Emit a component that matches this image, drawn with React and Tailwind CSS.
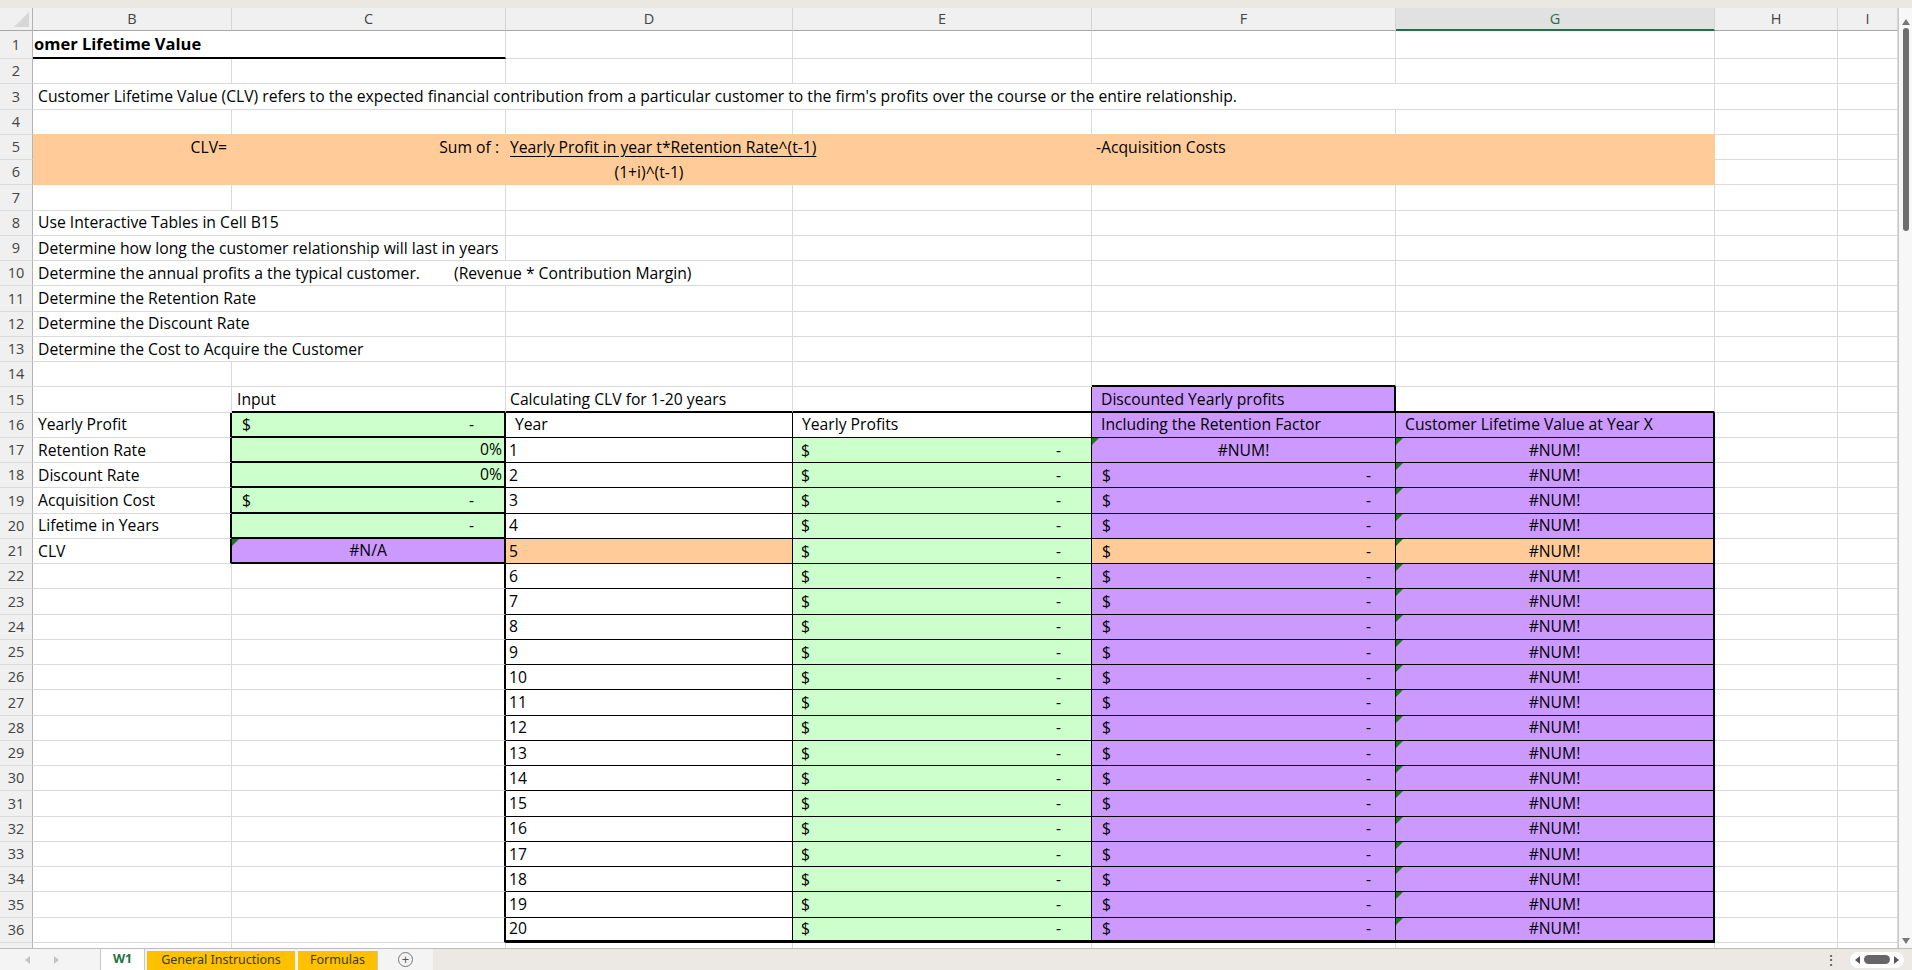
import clsx from 'clsx'

const GRID = 'border-r border-b border-[#dadada]'

const Tri = () => (
  <svg className="absolute left-0 top-0" width="7" height="7" viewBox="0 0 7 7">
    <polygon points="0,0 7,0 0,7" fill="#1a7a1a" />
  </svg>
)

const Cell = ({ w, b = GRID, className, tri, children }) => (
  <div className={clsx('relative shrink-0 h-full flex items-center pt-[1px] overflow-hidden whitespace-nowrap', w, b, className)}>
    {tri && <Tri />}
    {children}
  </div>
)

const Money = ({ l = 'pl-[8px]', r = 'pr-[30px]' }) => (
  <div className={clsx('flex w-full justify-between', l, r)}>
    <span>$</span>
    <span>-</span>
  </div>
)

const RowNum = ({ n }) => (
  <div className="shrink-0 w-[33px] h-full flex items-center justify-center bg-[#f0f0f0] border-r border-r-[#b4b4b4] border-b border-b-[#dcdcdc] text-[14.5px] text-[#444]">
    {n}
  </div>
)

const Row = ({ n, h = 'h-[25.25px]', children }) => (
  <div className={clsx('flex shrink-0', h)}>
    <RowNum n={n} />
    {children}
  </div>
)

const Tail = () => (
  <>
    <Cell w="w-[123px]" />
    <Cell w="w-[60px]" />
  </>
)

const ColHead = ({ w, label, active }) => (
  <div
    className={clsx(
      'shrink-0 h-full flex items-center justify-center text-[14.5px] border-r border-r-[#d4d4d4]',
      w,
      active
        ? 'bg-[#e1e1e1] text-[#1e7145] border-b-2 border-b-[#217346]'
        : 'bg-[#f0f0f0] text-[#444] border-b border-b-[#a8a8a8]'
    )}
  >
    {label}
  </div>
)

const OR = 'border-r border-b border-[#ffcc99] bg-[#ffcc99]'

export default function App() {
  const lower = []
  for (let r = 17; r <= 36; r++) {
    const year = r - 16
    const hi = r === 21
    const last = r === 36
    const rowB = last ? 'border-b-[3px]' : 'border-b'
    let cC
    if (r === 17 || r === 18) {
      cC = (
        <Cell w="w-[274px]" b="border-r-2 border-b-2 border-black bg-[#ccffcc]" className="justify-end pr-[2px]">
          0%
        </Cell>
      )
    } else if (r === 19) {
      cC = (
        <Cell w="w-[274px]" b="border-r-2 border-b-2 border-black bg-[#ccffcc]">
          <Money l="pl-[10px]" r="pr-[30px]" />
        </Cell>
      )
    } else if (r === 20) {
      cC = (
        <Cell w="w-[274px]" b="border-r-2 border-b-2 border-black bg-[#ccffcc]" className="justify-end pr-[30px]">
          -
        </Cell>
      )
    } else if (r === 21) {
      cC = (
        <Cell w="w-[274px]" b="border-r-2 border-b-2 border-black bg-[#cc99ff]" className="justify-center" tri>
          #N/A
        </Cell>
      )
    } else {
      cC = <Cell w="w-[274px]" b="border-r-2 border-r-black border-b border-b-[#dadada]" />
    }
    const labels = {
      17: 'Retention Rate',
      18: 'Discount Rate',
      19: 'Acquisition Cost',
      20: 'Lifetime in Years',
      21: 'CLV',
    }
    lower.push(
      <Row n={r} key={r}>
        <Cell
          w="w-[199px]"
          b={r <= 21 ? 'border-r-2 border-r-black border-b border-b-[#dadada]' : GRID}
          className="pl-[5px]"
        >
          {labels[r]}
        </Cell>
        {cC}
        <Cell
          w="w-[287px]"
          b={clsx('border-r border-black', rowB, hi ? 'bg-[#ffcc99]' : 'bg-white')}
          className="pl-[3px]"
        >
          {year}
        </Cell>
        <Cell w="w-[299px]" b={clsx('border-r border-black bg-[#ccffcc]', rowB)}>
          <Money />
        </Cell>
        {r === 17 ? (
          <Cell w="w-[304px]" b="border-r border-b border-black bg-[#cc99ff]" className="justify-center" tri>
            #NUM!
          </Cell>
        ) : (
          <Cell w="w-[304px]" b={clsx('border-r border-black', rowB, hi ? 'bg-[#ffcc99]' : 'bg-[#cc99ff]')}>
            <Money l="pl-[10px]" r="pr-[24px]" />
          </Cell>
        )}
        <Cell
          w="w-[319px]"
          b={clsx('border-r-2 border-black', rowB, hi ? 'bg-[#ffcc99]' : 'bg-[#cc99ff]')}
          className="justify-center"
          tri
        >
          #NUM!
        </Cell>
        <Tail />
      </Row>
    )
  }

  return (
    <div className="w-[1912px] h-[970px] overflow-hidden flex flex-col bg-white text-[15.7px] text-black font-['Open_Sans','Liberation_Sans',sans-serif]">
      <div className="h-[8px] shrink-0 bg-[#ebe7e3]" />

      <div className="flex h-[940px] shrink-0 overflow-hidden">
        <div className="w-[1898px] shrink-0 flex flex-col overflow-hidden">
          {/* column headers */}
          <div className="flex h-[23px] shrink-0">
            <div className="relative shrink-0 w-[33px] h-full bg-[#f0f0f0] border-r border-r-[#b4b4b4] border-b border-b-[#a8a8a8]">
              <svg className="absolute right-[3px] bottom-[3px]" width="15" height="15" viewBox="0 0 15 15">
                <polygon points="15,0 15,15 0,15" fill="#d6d6d6" />
              </svg>
            </div>
            <ColHead w="w-[199px]" label="B" />
            <ColHead w="w-[274px]" label="C" />
            <ColHead w="w-[287px]" label="D" />
            <ColHead w="w-[299px]" label="E" />
            <ColHead w="w-[304px]" label="F" />
            <ColHead w="w-[319px]" label="G" active />
            <ColHead w="w-[123px]" label="H" />
            <ColHead w="w-[60px]" label="I" />
          </div>

          <Row n={1} h="h-[28px]">
            <Cell w="w-[473px]" b="border-r border-r-[#dadada] border-b-2 border-b-black" className="pl-[1px] font-bold text-[16.5px]">
              omer Lifetime Value
            </Cell>
            <Cell w="w-[287px]" />
            <Cell w="w-[299px]" />
            <Cell w="w-[304px]" />
            <Cell w="w-[319px]" />
            <Tail />
          </Row>

          <Row n={2}>
            <Cell w="w-[199px]" />
            <Cell w="w-[274px]" />
            <Cell w="w-[287px]" />
            <Cell w="w-[299px]" />
            <Cell w="w-[304px]" />
            <Cell w="w-[319px]" />
            <Tail />
          </Row>

          <Row n={3}>
            <Cell w="w-[1682px]" className="pl-[5px]">
              Customer Lifetime Value (CLV) refers to the expected financial contribution from a particular customer to the firm's profits over the course or the entire relationship.
            </Cell>
            <Tail />
          </Row>

          <Row n={4}>
            <Cell w="w-[199px]" b="border-r border-r-[#dadada] border-b border-b-[#ffcc99]" />
            <Cell w="w-[274px]" b="border-r border-r-[#dadada] border-b border-b-[#ffcc99]" />
            <Cell w="w-[287px]" b="border-r border-r-[#dadada] border-b border-b-[#ffcc99]" />
            <Cell w="w-[299px]" b="border-r border-r-[#dadada] border-b border-b-[#ffcc99]" />
            <Cell w="w-[304px]" b="border-r border-r-[#dadada] border-b border-b-[#ffcc99]" />
            <Cell w="w-[319px]" b="border-r border-r-[#dadada] border-b border-b-[#ffcc99]" />
            <Tail />
          </Row>

          <Row n={5}>
            <Cell w="w-[199px]" b={OR} className="justify-end pr-[4px]">
              CLV=
            </Cell>
            <Cell w="w-[274px]" b={OR} className="justify-end pr-[6px]">
              Sum of :
            </Cell>
            <Cell w="w-[586px]" b={OR} className="pl-[4px]">
              <span className="underline underline-offset-[3px]">Yearly Profit in year t*Retention Rate^(t-1)</span>
            </Cell>
            <Cell w="w-[623px]" b={OR} className="pl-[4px]">
              -Acquisition Costs
            </Cell>
            <Tail />
          </Row>

          <Row n={6}>
            <Cell w="w-[199px]" b={OR} />
            <Cell w="w-[274px]" b={OR} />
            <Cell w="w-[287px]" b={OR} className="justify-center">
              (1+i)^(t-1)
            </Cell>
            <Cell w="w-[299px]" b={OR} />
            <Cell w="w-[304px]" b={OR} />
            <Cell w="w-[319px]" b={OR} />
            <Tail />
          </Row>

          <Row n={7}>
            <Cell w="w-[199px]" />
            <Cell w="w-[274px]" />
            <Cell w="w-[287px]" />
            <Cell w="w-[299px]" />
            <Cell w="w-[304px]" />
            <Cell w="w-[319px]" />
            <Tail />
          </Row>

          {[
            [8, 'Use Interactive Tables in Cell B15'],
            [9, 'Determine how long the customer relationship will last in years'],
          ].map(([n, t]) => (
            <Row n={n} key={n}>
              <Cell w="w-[473px]" className="pl-[5px]">
                {t}
              </Cell>
              <Cell w="w-[287px]" />
              <Cell w="w-[299px]" />
              <Cell w="w-[304px]" />
              <Cell w="w-[319px]" />
              <Tail />
            </Row>
          ))}

          <Row n={10}>
            <Cell w="w-[760px]" className="pl-[5px]">
              <span className="w-[416px] shrink-0">Determine the annual profits a the typical customer.</span>
              <span>(Revenue * Contribution Margin)</span>
            </Cell>
            <Cell w="w-[299px]" />
            <Cell w="w-[304px]" />
            <Cell w="w-[319px]" />
            <Tail />
          </Row>

          {[
            [11, 'Determine the Retention Rate'],
            [12, 'Determine the Discount Rate'],
            [13, 'Determine the Cost to Acquire the Customer'],
          ].map(([n, t]) => (
            <Row n={n} key={n}>
              <Cell w="w-[473px]" className="pl-[5px]">
                {t}
              </Cell>
              <Cell w="w-[287px]" />
              <Cell w="w-[299px]" />
              <Cell w="w-[304px]" />
              <Cell w="w-[319px]" />
              <Tail />
            </Row>
          ))}

          <Row n={14}>
            <Cell w="w-[199px]" />
            <Cell w="w-[274px]" />
            <Cell w="w-[287px]" />
            <Cell w="w-[299px]" />
            <Cell w="w-[304px]" b="border-r border-r-[#dadada] border-b-2 border-b-black" />
            <Cell w="w-[319px]" />
            <Tail />
          </Row>

          <Row n={15}>
            <Cell w="w-[199px]" />
            <Cell w="w-[274px]" b="border-r border-r-[#dadada] border-b-2 border-b-black" className="pl-[5px]">
              Input
            </Cell>
            <Cell w="w-[287px]" b="border-r border-r-[#dadada] border-b-2 border-b-black" className="pl-[4px]">
              Calculating CLV for 1-20 years
            </Cell>
            <Cell w="w-[299px]" b="border-r border-r-black border-b-2 border-b-black" />
            <Cell w="w-[304px]" b="border-r-2 border-b-2 border-black bg-[#cc99ff]" className="pl-[9px]">
              Discounted Yearly profits
            </Cell>
            <Cell w="w-[319px]" b="border-r border-r-[#dadada] border-b-2 border-b-black" />
            <Tail />
          </Row>

          <Row n={16}>
            <Cell w="w-[199px]" b="border-r-2 border-r-black border-b border-b-[#dadada]" className="pl-[5px]">
              Yearly Profit
            </Cell>
            <Cell w="w-[274px]" b="border-r-2 border-b-2 border-black bg-[#ccffcc]">
              <Money l="pl-[10px]" r="pr-[30px]" />
            </Cell>
            <Cell w="w-[287px]" b="border-r border-b border-black" className="pl-[9px]">
              Year
            </Cell>
            <Cell w="w-[299px]" b="border-r border-b border-black" className="pl-[9px]">
              Yearly Profits
            </Cell>
            <Cell w="w-[304px]" b="border-r border-b border-black bg-[#cc99ff]" className="pl-[9px]">
              Including the Retention Factor
            </Cell>
            <Cell w="w-[319px]" b="border-r-2 border-r-black border-b border-b-black bg-[#cc99ff]" className="pl-[9px]">
              Customer Lifetime Value at Year X
            </Cell>
            <Tail />
          </Row>

          {lower}

          <Row n="">
            <Cell w="w-[199px]" />
            <Cell w="w-[274px]" />
            <Cell w="w-[287px]" />
            <Cell w="w-[299px]" />
            <Cell w="w-[304px]" />
            <Cell w="w-[319px]" />
            <Tail />
          </Row>
        </div>

        {/* vertical scrollbar */}
        <div className="w-[14px] shrink-0 bg-[#f7f7f7] border-l border-l-[#c8c8c8] flex flex-col items-center">
          <svg className="mt-[11px]" width="8" height="6" viewBox="0 0 8 6">
            <polygon points="4,0 8,6 0,6" fill="#777" />
          </svg>
          <div className="mt-[3px] w-[6px] h-[203px] rounded-full bg-[#6e6e6e]" />
          <div className="flex-1" />
          <svg className="mb-[4px]" width="8" height="6" viewBox="0 0 8 6">
            <polygon points="0,0 8,0 4,6" fill="#777" />
          </svg>
        </div>
      </div>

      {/* sheet tabs */}
      <div className="flex h-[22px] shrink-0 border-t border-t-[#bdbdbd] text-[12.5px] font-['Noto_Sans','Open_Sans',sans-serif]">
        <div className="flex h-full w-[433px] shrink-0 bg-[#f4f4f4]">
          <div className="w-[100px] shrink-0 flex items-center">
            <svg className="ml-[25px]" width="5" height="8" viewBox="0 0 5 8">
              <polygon points="5,0 5,8 0,4" fill="#c4c4c4" />
            </svg>
            <svg className="ml-[24px]" width="5" height="8" viewBox="0 0 5 8">
              <polygon points="0,0 5,4 0,8" fill="#c4c4c4" />
            </svg>
          </div>
          <div className="w-[45px] shrink-0 h-full bg-white border-x border-x-[#c6c6c6] flex items-center justify-center font-bold text-[#1e7145]">
            W1
          </div>
          <div className="w-[148px] shrink-0 mt-[2px] ml-[2px] bg-[#ffc000] flex items-center justify-center text-[#3a3a3a]">
            General Instructions
          </div>
          <div className="w-[80px] shrink-0 mt-[2px] ml-[3px] bg-[#ffc000] border-r border-r-[#c6c6c6] flex items-center justify-center text-[#3a3a3a]">
            Formulas
          </div>
          <div className="flex-1 flex items-center justify-center">
            <div className="w-[15px] h-[15px] rounded-full border border-[#777] flex items-center justify-center text-[#555] text-[13px] leading-none">
              +
            </div>
          </div>
        </div>
        <div className="flex-1 h-full bg-[#ece8e4] flex items-center justify-end pr-[8px]">
          <span className="mr-[12px] text-[#444] text-[14px] leading-none">⋮</span>
          <div className="flex items-center gap-[4px] bg-white rounded-full px-[5px] h-[16px]">
            <svg width="5" height="8" viewBox="0 0 5 8">
              <polygon points="5,0 5,8 0,4" fill="#555" />
            </svg>
            <div className="w-[26px] h-[9px] rounded-full bg-[#666]" />
            <svg width="5" height="8" viewBox="0 0 5 8">
              <polygon points="0,0 5,4 0,8" fill="#555" />
            </svg>
          </div>
        </div>
      </div>
    </div>
  )
}
